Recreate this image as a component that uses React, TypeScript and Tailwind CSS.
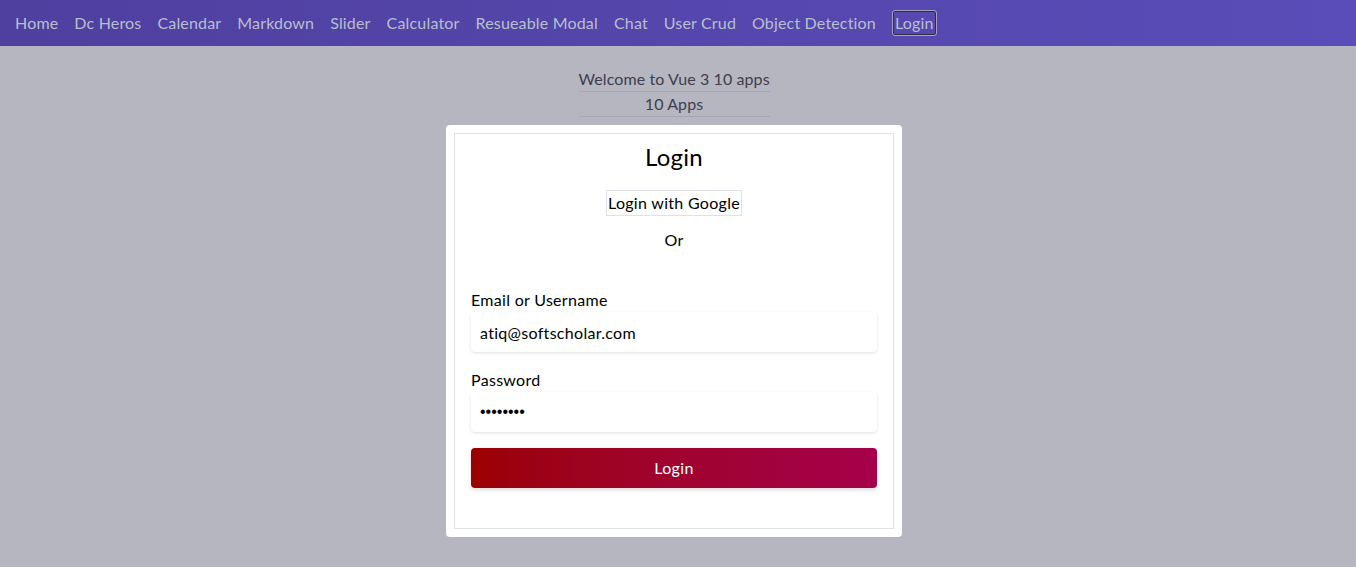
import { useState } from "react";

const NAV_ITEMS = [
  "Home",
  "Dc Heros",
  "Calendar",
  "Markdown",
  "Slider",
  "Calculator",
  "Resueable Modal",
  "Chat",
  "User Crud",
  "Object Detection",
];

export default function App() {
  const [email, setEmail] = useState("atiq@softscholar.com");
  const [password, setPassword] = useState("12345678");

  return (
    <div className="min-h-screen bg-[#b6b6c1] font-['Lato','Open_Sans',sans-serif] text-[16px] tracking-[0.3px]">
      {/* top nav */}
      <nav className="h-[46px] flex items-center gap-4 px-[15px] tracking-[0.17px] bg-gradient-to-r from-[#4f3f9f] to-[#5a4db9]">
        {NAV_ITEMS.map((item) => (
          <a key={item} href="#" className="text-[#b8bfcf] leading-6 whitespace-nowrap">
            {item}
          </a>
        ))}
        <a
          href="#"
          className="text-[#b8bfcf] leading-6 px-[2px] rounded-[3px] border border-[#a3a3b3] shadow-[inset_0_0_0_1px_#2e2e40]"
        >
          Login
        </a>
      </nav>

      <div className="flex flex-col items-center pt-[21px] pr-2">
        <div className="w-[191px] text-center text-[#3e3e4c] whitespace-nowrap tracking-[0.1px]">
          <div className="h-[25px] leading-6 border-b border-[#a6a6b2]">Welcome to Vue 3 10 apps</div>
          <div className="h-[25px] leading-6 border-b border-[#a6a6b2]">10 Apps</div>
        </div>

        {/* login card */}
        <div className="mt-[8px] w-[456px] bg-white rounded-[4px] p-2">
          <div className="border border-[#e1e1e8] px-4 pt-[7px] pb-[40px] flex flex-col">
            <h2 className="text-center text-[24px] leading-8 text-black">Login</h2>
            <div className="flex justify-center mt-[17px]">
              <button className="border border-[#e0e0e6] px-px leading-6 text-black">Login with Google</button>
            </div>
            <p className="text-center mt-3 leading-6 text-black">Or</p>

            <label className="mt-[36px] leading-6 text-black">Email or Username</label>
            <input
              value={email}
              onChange={(e) => setEmail(e.target.value)}
              className="h-10 rounded-[4px] px-[9px] text-black outline-none shadow-[0_1px_3px_rgba(0,0,0,0.12)]"
            />

            <label className="mt-4 leading-6 text-black">Password</label>
            <input
              type="password"
              value={password}
              onChange={(e) => setPassword(e.target.value)}
              className="h-10 rounded-[4px] px-[9px] text-black outline-none font-['Liberation_Sans',sans-serif] tracking-normal shadow-[0_1px_3px_rgba(0,0,0,0.12)]"
            />

            <button className="mt-4 h-10 rounded-[4px] text-white bg-gradient-to-r from-[#9a0000] to-[#a5004a] shadow-[0_2px_4px_rgba(0,0,0,0.15)]">
              Login
            </button>
          </div>
        </div>
      </div>
    </div>
  );
}
